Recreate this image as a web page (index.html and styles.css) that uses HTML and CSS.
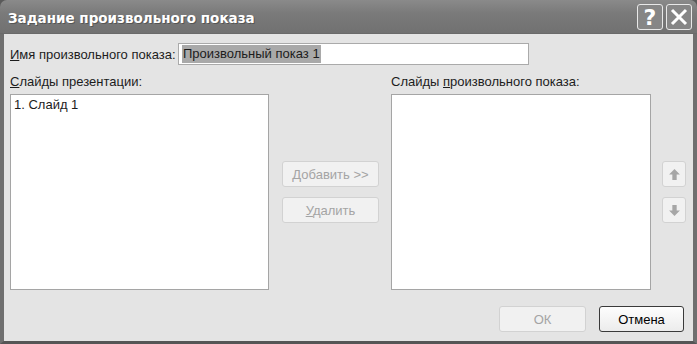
FILE: index.html
```html
<!DOCTYPE html>
<html lang="ru">
<head>
    <meta charset="UTF-8">
    <title>Задание произвольного показа</title>
    <link rel="stylesheet" href="styles.css">
</head>
<body>
    <div class="window">
        <div class="titlebar">
            <span class="title">Задание произвольного показа</span>
            <div class="caption-btns">
                <span class="cap-btn help">?</span>
                <span class="cap-btn close">
                    <svg width="18" height="18" viewBox="0 0 18 18"><path d="M2 2 L16 16 M16 2 L2 16" stroke="#fff" stroke-width="3"/></svg>
                </span>
            </div>
        </div>

        <div class="frame">
            <div class="name-row">
                <label><u>И</u>мя произвольного показа:</label>
                <div class="textbox"><span class="sel">Произвольный показ 1</span></div>
            </div>

            <div class="lists">
                <div class="lbl"><u>С</u>лайды презентации:</div>
                <div></div>
                <div class="lbl">Слайды <u>п</u>роизвольного показа:</div>
                <div></div>

                <div class="listbox"><div class="item">1. Слайд 1</div></div>
                <div class="mid-btns">
                    <button class="btn disabled"><u>Д</u>обавить &gt;&gt;</button>
                    <button class="btn disabled"><u>У</u>далить</button>
                </div>
                <div class="listbox"></div>
                <div class="arrow-btns">
                    <span class="arrow-btn">
                        <svg width="13" height="13" viewBox="0 0 12 12"><path d="M6 1 L11 6 L8 6 L8 11 L4 11 L4 6 L1 6 Z" fill="#a6a6a6"/></svg>
                    </span>
                    <span class="arrow-btn">
                        <svg width="13" height="13" viewBox="0 0 12 12"><path d="M6 11 L11 6 L8 6 L8 1 L4 1 L4 6 L1 6 Z" fill="#a6a6a6"/></svg>
                    </span>
                </div>
            </div>

            <div class="footer">
                <button class="btn disabled ok">ОК</button>
                <button class="btn default cancel">Отмена</button>
            </div>
        </div>
    </div>
</body>
</html>
```

FILE: styles.css
```css
body {
    margin: 0;
    background: #5a5a5a;
    font-family: "Liberation Sans", Arial, sans-serif;
    font-size: 13px;
    color: #1c1c1c;
}
.window {
    width: 697px;
    height: 344px;
    display: flex;
    flex-direction: column;
}
.titlebar {
    height: 34px;
    box-sizing: border-box;
    display: flex;
    align-items: center;
    justify-content: space-between;
    padding: 0 5px 0 8px;
    background: linear-gradient(#8a8a8a, #7a7a7a 40%, #717171);
    border-radius: 7px 7px 0 0;
    border-bottom: 1px solid #6a6a6a;
}
.title {
    font-family: "DejaVu Sans", sans-serif;
    font-weight: bold;
    font-size: 13.5px;
    color: #fff;
    text-shadow: 1px 1px 0 #555;
    margin-top: 2px;
}
.caption-btns {
    display: flex;
    gap: 3px;
    margin-top: 1px;
}
.cap-btn {
    width: 26px;
    height: 26px;
    box-sizing: border-box;
    border: 1px solid #e8e8e8;
    border-radius: 3px;
    background: #868686;
    display: flex;
    align-items: center;
    justify-content: center;
}
.help {
    color: #fff;
    font-family: "DejaVu Sans", sans-serif;
    font-weight: bold;
    font-size: 22px;
}
.frame {
    flex: 1;
    background: #e4e4e4;
    border-left: 4px solid #6f6f6f;
    border-right: 4px solid #6f6f6f;
    border-bottom: 3px solid #555;
    padding: 9px 9px 9px 6px;
    display: flex;
    flex-direction: column;
}
.name-row {
    display: flex;
    align-items: center;
    height: 22px;
}
.name-row label {
    width: 168px;
}
.textbox {
    width: 351px;
    height: 22px;
    box-sizing: border-box;
    border: 1px solid #aaa;
    background: #fff;
    padding: 0 0 0 3px;
    display: flex;
    align-items: center;
}
.sel {
    background: #a9a9a9;
    padding: 0 1px;
    line-height: 18px;
}
.lists {
    display: grid;
    grid-template-columns: 259px 122px 260px auto;
    grid-template-rows: 16px 196px;
    row-gap: 4px;
    margin-top: 9px;
}
.lbl {
    line-height: 16px;
}
.listbox {
    background: #fff;
    border: 1px solid #a5a5a5;
    box-sizing: border-box;
    padding: 2px 3px;
}
.item {
    line-height: 16px;
}
.mid-btns {
    display: flex;
    flex-direction: column;
    gap: 10px;
    padding: 67px 0 0 13px;
}
.btn {
    font-family: "Liberation Sans", Arial, sans-serif;
    font-size: 13px;
    height: 26px;
    border-radius: 3px;
    padding: 0;
}
.disabled {
    width: 97px;
    background: #f1f1f1;
    border: 1px solid #d2d2d2;
    color: #a4a4a4;
}
.arrow-btns {
    display: flex;
    flex-direction: column;
    gap: 10px;
    padding: 67px 0 0 11px;
}
.arrow-btn {
    width: 24px;
    height: 26px;
    box-sizing: border-box;
    background: #f1f1f1;
    border: 1px solid #d2d2d2;
    border-radius: 3px;
    display: flex;
    align-items: center;
    justify-content: center;
}
.footer {
    display: flex;
    justify-content: flex-end;
    gap: 13px;
    margin-top: 16px;
}
.ok {
    width: 87px;
}
.default {
    width: 85px;
    background: linear-gradient(#fdfdfd, #ececec);
    border: 1px solid #3a3a3a;
    color: #000;
}
```
